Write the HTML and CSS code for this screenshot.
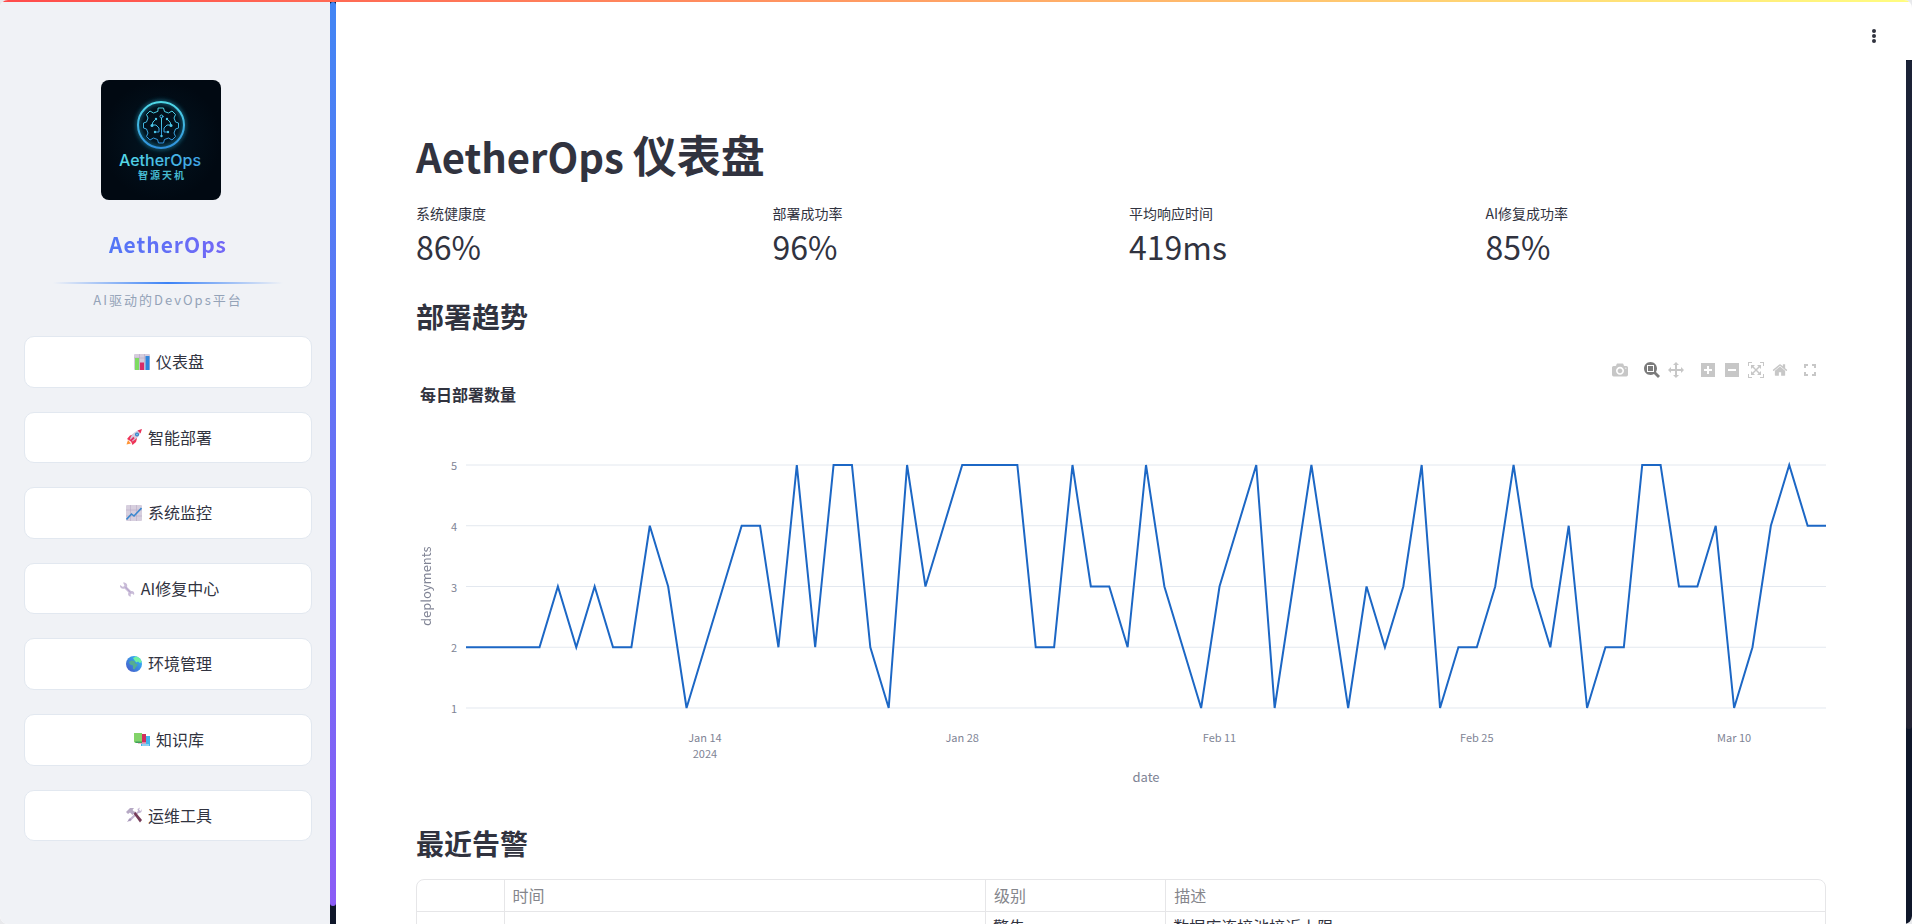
FILE: index.html
```html
<!DOCTYPE html>
<html lang="zh-CN">
<head>
<meta charset="utf-8">
<title>AetherOps 仪表盘</title>
<link rel="stylesheet" href="styles.css">
</head>
<body>
<div class="topline"></div>
<div class="app">
  <aside class="sidebar">
    <svg class="logo" viewBox="0 0 120 120" role="img" aria-label="AetherOps 智源天机">
      <defs>
        <radialGradient id="lbg"><stop offset="0" stop-color="#031522"/><stop offset="1" stop-color="#010912"/></radialGradient>
        <linearGradient id="lst" x1="0" y1="0" x2="0" y2="1"><stop offset="0" stop-color="#4fd8e6"/><stop offset="1" stop-color="#2f8fdc"/></linearGradient>
        <linearGradient id="ltx" x1="0" y1="0" x2="1" y2="0"><stop offset="0" stop-color="#55dbe4"/><stop offset="1" stop-color="#3fa3e6"/></linearGradient>
        <filter id="glow" x="-20%" y="-20%" width="140%" height="140%"><feGaussianBlur stdDeviation="2"/></filter>
      </defs>
      <rect width="120" height="120" fill="url(#lbg)"/>
      <circle cx="60" cy="45" r="23" fill="none" stroke="#1d7f9c" stroke-width="4" opacity=".7" filter="url(#glow)"/>
      <circle cx="60" cy="45" r="23" fill="none" stroke="url(#lst)" stroke-width="2"/>
      <g fill="none" stroke="url(#lst)" stroke-width="1" stroke-linejoin="round" stroke-linecap="round">
        <path d="M57.500 28h5l1 3.500 4 1.500 3.500-2 3.500 3.500-1.500 3.500 1.500 4 3 1v5l-3 1-1.500 4 1.500 3.500-3.500 3.500-3.500-2-4 1.500-1 3.500h-5l-1-3.500-4-1.500-3.500 2-3.500-3.500 1.500-3.500-1.500-4-3-1v-5l3-1 1.500-4-1.500-3.500 3.500-3.500 3.500 2 4-1.500z"/>
        <circle cx="60.500" cy="36.500" r="1.500"/>
        <path d="M60.500 38v18M55 39l-3 3-1 3h4l3 3v4h-3M66 39l3 3 1 3h-4l-3 3v4h3"/>
      </g>
      <g fill="#4cc6e8"><circle cx="60.500" cy="56" r="1.200"/><circle cx="55" cy="39" r="1.200"/><circle cx="66" cy="39" r="1.200"/><circle cx="51" cy="45.500" r="1.500"/><circle cx="70" cy="45.500" r="1.500"/><circle cx="54" cy="52" r="1.200"/><circle cx="67" cy="52" r="1.200"/></g>
      <text class="logo-name" x="59" y="86" fill="url(#ltx)">AetherOps</text>
      <text class="logo-cn" x="61" y="99" fill="#45b9cf">智源天机</text>
    </svg>
    <h2 class="brand">AetherOps</h2>
    <div class="rule"></div>
    <p class="tagline">AI驱动的DevOps平台</p>
    <nav class="nav">
      <button class="nav-btn"><svg class="emoji" viewBox="0 0 16 16"><rect width="16" height="16" rx="1" fill="#d5ccdc"/><path d="M5.500 0v16M10.500 0v16M0 4h16" stroke="#b7a9c4" stroke-width=".6"/><rect x="1" y="4" width="4" height="12" fill="#7edb62"/><rect x="6" y="8.500" width="4" height="7.500" fill="#d92c68"/><rect x="11.500" y="2" width="4" height="14" fill="#2f86dc"/></svg><span>仪表盘</span></button>
      <button class="nav-btn"><svg class="emoji" viewBox="0 0 16 16"><path d="M1 10l3-3.500 3-1 4 4-1 3.500-3.500 3-1.500-3.500z" fill="#ee3558"/><path d="M.5 15.500l1.500-4.500 3 3.500z" fill="#ff9535"/><path d="M4 10C5.500 5 9.500 1.500 15 .5c-.5 5.500-4 9.500-9 12z" fill="#d5cadd"/><path d="M11.500 1.500L16 0l-1.500 4.500z" fill="#ea3158"/><circle cx="11" cy="5.500" r="2" fill="#317ac0"/><circle cx="11" cy="5.500" r="1" fill="#71c4f2"/><path d="M4.500 12l3.500-3.500" stroke="#e53061" stroke-width="1.800"/></svg><span>智能部署</span></button>
      <button class="nav-btn"><svg class="emoji" viewBox="0 0 16 16"><rect width="16" height="16" rx="1" fill="#d7cfde"/><path d="M4.500 0v16M10.500 0v16M0 5h16M0 11h16" stroke="#b8abc6" stroke-width=".6"/><path d="M.5 14.500l5-5.500 2.500 2 7.500-8" fill="none" stroke="#3b88cf" stroke-width="1.600"/></svg><span>系统监控</span></button>
      <button class="nav-btn"><svg class="emoji" viewBox="0 0 16 16"><path d="M1 4l3 2 1.500-1.500L4 1.500c3-.5 5 2 4 4.500l4 4c2.500-.5 4 1.500 3 4l-2-1.500-1.500 1L12 15.500c-2.500 0-3.500-2-2.500-4L5.500 7.500C3 8.500.5 6.500 1 4z" fill="#c9bcd8"/><path d="M6.500 6l5 5.500" stroke="#b3a1cb" stroke-width="1"/></svg><span>AI修复中心</span></button>
      <button class="nav-btn"><svg class="emoji" viewBox="0 0 16 16"><defs><linearGradient id="sea" x1="1" y1="0" x2="0" y2="1"><stop offset="0" stop-color="#30c4ff"/><stop offset="1" stop-color="#4852c5"/></linearGradient></defs><circle cx="8" cy="8" r="8" fill="url(#sea)"/><path d="M7 2l3-1.500c3 .5 5 2.500 5.800 5.500l-2 1-1.800-1.500-1.500 1L9 5z" fill="#6ff0a0"/><path d="M3 6l2.500-1.500 3 .5 1 2.500L12 8.500 10 11l-1.500 2.500L7 13V9.500L4 8.500z" fill="#55ad92"/></svg><span>环境管理</span></button>
      <button class="nav-btn"><svg class="emoji" viewBox="0 0 16 16"><path d="M11 4h5v10H7v-3h4z" fill="#42b4ec"/><path d="M8 2h4v9.500H4V9h4z" fill="#d12f5d"/><path d="M3.500 10.500H12v1H4z" fill="#f3dceb"/><path d="M0 1h8v10H1.500L0 10z" fill="#83d369"/><path d="M1 9.500h7V11H2z" fill="#3e9e5e"/><path d="M8 12.500h7v1H8z" fill="#d9eefa"/></svg><span>知识库</span></button>
      <button class="nav-btn"><svg class="emoji" viewBox="0 0 16 16"><path d="M2 13L12 4l-.5-2L14 .5 13 3l2 1 .5-2c1 2-.5 4.500-3 4L4 14.500z" fill="#c3b5d1"/><path d="M7 6l2-1.500L16 13l-2 2.500z" fill="#753b58"/><path d="M0 5l4-4h4L6.500 3 9 5.500 6.500 8 4 5.500 2 7z" fill="#b6a9c4"/><path d="M1 15l3-4 1.500 2z" fill="#a594b7"/></svg><span>运维工具</span></button>
    </nav>
  </aside>
  <div class="track track-left"><div class="thumb thumb-left"></div></div>
  <main class="main">
    <header class="toolbar"><button class="menu" aria-label="菜单"><svg viewBox="0 0 4 16"><circle cx="2" cy="3" r="2"/><circle cx="2" cy="8" r="2"/><circle cx="2" cy="13" r="2"/></svg></button></header>
    <div class="scroller">
      <div class="content">
        <h1><span class="latin">AetherOps </span>仪表盘</h1>
        <section class="metrics">
          <div><div class="label">系统健康度</div><div class="value">86%</div></div>
          <div><div class="label">部署成功率</div><div class="value">96%</div></div>
          <div><div class="label">平均响应时间</div><div class="value">419ms</div></div>
          <div><div class="label">AI修复成功率</div><div class="value">85%</div></div>
        </section>
        <h2 class="section-title">部署趋势</h2>
        <section class="chart">
          <div class="modebar">
            <div class="group"><button aria-label="Download plot"><svg viewBox="0 0 1000 1000"><path transform="matrix(1 0 0 -1 0 850)" d="m500 450c-83 0-150-67-150-150 0-83 67-150 150-150 83 0 150 67 150 150 0 83-67 150-150 150z m400 150h-120c-16 0-34 13-39 29l-31 93c-6 15-23 28-40 28h-340c-16 0-34-13-39-28l-31-94c-6-15-23-28-40-28h-120c-55 0-100-45-100-100v-450c0-55 45-100 100-100h800c55 0 100 45 100 100v450c0 55-45 100-100 100z m-400-550c-138 0-250 112-250 250 0 138 112 250 250 250 138 0 250-112 250-250 0-138-112-250-250-250z m365 380c-19 0-35 16-35 35 0 19 16 35 35 35 19 0 35-16 35-35 0-19-16-35-35-35z"/></svg></button></div>
            <div class="group"><button class="active" aria-label="Zoom"><svg viewBox="0 0 1000 1000"><path transform="matrix(1 0 0 -1 0 850)" d="m1000-25l-250 251c40 63 63 138 63 218 0 224-182 406-407 406-224 0-406-182-406-406s183-406 407-406c80 0 155 22 218 62l250-250 125 125z m-812 250l0 438 437 0 0-438-437 0z m62 375l313 0 0-312-313 0 0 312z"/></svg></button><button aria-label="Pan"><svg viewBox="0 0 1000 1000"><path transform="matrix(1 0 0 -1 0 850)" d="m1000 350l-187 188 0-125-250 0 0 250 125 0-188 187-187-187 125 0 0-250-250 0 0 125-188-188 186-187 0 125 252 0 0-250-125 0 187-188 188 188-125 0 0 250 250 0 0-126 187 188z"/></svg></button></div>
            <div class="group"><button aria-label="Zoom in"><svg viewBox="-62 0 1000 1000"><path transform="matrix(1 0 0 -1 0 850)" d="m1 787l0-875 875 0 0 875-875 0z m687-500l-187 0 0-187-125 0 0 187-188 0 0 125 188 0 0 187 125 0 0-187 187 0 0-125z"/></svg></button><button aria-label="Zoom out"><svg viewBox="-62 0 1000 1000"><path transform="matrix(1 0 0 -1 0 850)" d="m0 788l0-876 875 0 0 876-875 0z m688-500l-500 0 0 125 500 0 0-125z"/></svg></button><button aria-label="Autoscale"><svg viewBox="0 0 1000 1000"><path transform="matrix(1 0 0 -1 0 850)" d="m250 850l-187 0-63 0 0-62 0-188 63 0 0 188 187 0 0 62z m688 0l-188 0 0-62 188 0 0-188 62 0 0 188 0 62-62 0z m-875-938l0 188-63 0 0-188 0-62 63 0 187 0 0 62-187 0z m875 188l0-188-188 0 0-62 188 0 62 0 0 62 0 188-62 0z m-125 188l-1 0-93-94-156 156 156 156 92-93 2 0 0 250-250 0 0-2 93-92-156-156-156 156 94 92 0 2-250 0 0-250 0 0 93 93 157-156-157-156-93 94 0 0 0-250 250 0 0 0-94 93 156 157 156-157-93-93 0 0 250 0 0 250z"/></svg></button><button aria-label="Reset axes"><svg viewBox="-36 0 1000 1000"><path transform="matrix(1 0 0 -1 0 850)" d="m786 296v-267q0-15-11-26t-25-10h-214v214h-143v-214h-214q-15 0-25 10t-11 26v267q0 1 0 2t0 2l321 264 321-264q1-1 1-4z m124 39l-34-41q-5-5-12-6h-2q-7 0-12 3l-386 322-386-322q-7-4-13-4-7 2-12 7l-35 41q-4 5-3 13t6 12l401 334q18 15 42 15t43-15l136-114v109q0 8 5 13t13 5h107q8 0 13-5t5-13v-227l122-102q5-5 6-12t-4-13z"/></svg></button></div>
            <div class="group"><button aria-label="Fullscreen"><svg viewBox="0 0 16 16"><path fill-rule="evenodd" d="M2 2h4v2H4v2H2zM10 2h4v4h-2V4h-2zM2 10h2v2h2v2H2zM12 10h2v4h-4v-2h2z"/></svg></button></div>
          </div>
          <h3 class="chart-title">每日部署数量</h3>
          <div class="plot">
            <div class="y-title">deployments</div>
            <div class="y-ticks"><span>5</span><span>4</span><span>3</span><span>2</span><span>1</span></div>
            <svg class="canvas" viewBox="0 0 74 4" preserveAspectRatio="none" aria-hidden="true">
              <path class="grid" d="M0 0H74M0 1H74M0 2H74M0 3H74M0 4H74"/>
              <polyline class="series" points="0,3 4,3 5,2 6,3 7,2 8,3 9,3 10,1 11,2 12,4 13,3 14,2 15,1 16,1 17,3 18,0 19,3 20,0 21,0 22,3 23,4 24,0 25,2 26,1 27,0 30,0 31,3 32,3 33,0 34,2 35,2 36,3 37,0 38,2 39,3 40,4 41,2 42,1 43,0 44,4 45,2 46,0 47,2 48,4 49,2 50,3 51,2 52,0 53,4 54,3 55,3 56,2 57,0 58,2 59,3 60,1 61,4 62,3 63,3 64,0 65,0 66,2 67,2 68,1 69,4 70,3 71,1 72,0 73,1 74,1"/>
            </svg>
            <div class="x-ticks"><span class="t1">Jan 14<br>2024</span><span class="t2">Jan 28</span><span class="t3">Feb 11</span><span class="t4">Feb 25</span><span class="t5">Mar 10</span></div>
            <div class="x-title">date</div>
          </div>
        </section>
        <h2 class="section-title">最近告警</h2>
        <div class="table-wrap">
          <table>
            <colgroup><col class="c-index"><col class="c-time"><col class="c-level"><col></colgroup>
            <thead><tr><th></th><th>时间</th><th>级别</th><th>描述</th></tr></thead>
            <tbody><tr><td></td><td></td><td>警告</td><td>数据库连接池接近上限</td></tr></tbody>
          </table>
        </div>
      </div>
    </div>
  </main>
  <div class="track track-right"><div class="thumb thumb-right"></div></div>
</div>
</body>
</html>
```

FILE: styles.css
```css
* { box-sizing: border-box; }
html { background: #e8e9ec; }
body {
  margin: 0;
  height: 100vh;
  overflow: hidden;
  display: flex;
  flex-direction: column;
  border-radius: 8px;
  background: #fff;
  color: #31333f;
  font: 16px/1.6 "Noto Sans CJK SC", sans-serif;
}
button { font: inherit; color: inherit; }
h1, h2, h3, p { margin: 0; }

.topline { height: 2px; flex: none; background: linear-gradient(90deg, #ff4b4b, #fffd80); }
.app { flex: 1; min-height: 0; display: flex; }

.sidebar {
  width: 330px;
  flex: none;
  background: #f0f2f6;
  padding: 78px 18px 0 24px;
  overflow: hidden;
  display: flex;
  flex-direction: column;
  align-items: center;
}
.logo { width: 120px; height: 120px; flex: none; border-radius: 8px; margin-right: 14px; }
.logo-name { font: 500 16px Inter, sans-serif; text-anchor: middle; }
.logo-cn { font: 700 10px "Noto Sans CJK SC", sans-serif; letter-spacing: 2px; text-anchor: middle; }
.brand {
  margin-top: 24px;
  font-size: 21px;
  line-height: 40px;
  font-weight: 700;
  letter-spacing: 1px;
  background: linear-gradient(90deg, #3b82f6, #8b5cf6);
  -webkit-background-clip: text;
  background-clip: text;
  color: transparent;
  align-self: stretch;
  text-align: center;
}
.rule { width: 80%; height: 2px; margin-top: 18px; background: linear-gradient(90deg, transparent, #3b82f6, transparent); flex: none; }
.tagline { margin-top: 6px; font-size: 13px; line-height: 20px; letter-spacing: 2px; color: #94a3b8; }
.nav { align-self: stretch; margin-top: 26px; display: flex; flex-direction: column; gap: 24px; }
.nav-btn {
  display: flex;
  align-items: center;
  justify-content: center;
  gap: 6px;
  padding: 12px 12px 12px 14px;
  border: 1px solid #e2e8f0;
  border-radius: 10px;
  background: #fff;
  line-height: 1.6;
}
.emoji { width: 16px; height: 16px; }

.track { width: 6px; flex: none; background: #0f172a; }
.thumb { border-radius: 3px; }
.thumb-left { height: 98%; background: linear-gradient(180deg, #4285f4, #8b5cf6); }
.track-right { margin-top: 58px; border-radius: 0 0 8px 0; }
.thumb-right { height: 77.4%; background: linear-gradient(180deg, #1b2237, #242434); }

.main { flex: 1; min-width: 0; display: flex; flex-direction: column; }
.toolbar { height: 58px; flex: none; display: flex; justify-content: flex-end; align-items: center; padding: 10px 28px 0; }
.menu { border: 0; background: none; padding: 4px 2px; display: flex; }
.menu svg { width: 4px; height: 16px; fill: #31333f; }
.scroller { flex: 1; min-height: 0; overflow: hidden; }
.content { padding: 68px 80px 0; }
h1 { font-size: 44px; line-height: 53px; font-weight: 700; }
.latin { font-size: 40px; line-height: 1; }
.metrics { margin-top: 22px; display: grid; grid-template-columns: repeat(4, 1fr); gap: 16px; }
.label { font-size: 14px; line-height: 20px; }
.value { font-size: 32px; line-height: 46px; }
.section-title { font-size: 28px; line-height: 34px; font-weight: 700; }
.metrics + .section-title { margin-top: 30px; }

.modebar { display: flex; justify-content: flex-end; margin-top: 25px; padding-right: 4px; height: 24px; align-items: center; }
.group { display: flex; padding-left: 8px; }
.group:last-child { padding-left: 6px; }
.modebar button { width: 24px; height: 24px; padding: 4px; border: 0; background: none; display: flex; }
.modebar svg { width: 16px; height: 16px; fill: #c7c7c7; }
.modebar .active svg { fill: #7b7b7b; }
.chart-title { font-size: 16px; line-height: 24px; font-weight: 700; padding-left: 4px; }
.plot {
  margin-top: 51px;
  display: grid;
  grid-template-columns: 20px 30px minmax(0, 1fr);
  grid-template-rows: 259px auto auto;
}
.y-title { writing-mode: vertical-rl; rotate: 180deg; text-align: center; font-size: 13px; line-height: 20px; color: #808495; }
.y-ticks { display: flex; flex-direction: column; justify-content: space-between; align-items: flex-end; padding-right: 9px; font-size: 11px; line-height: 16px; color: #808495; }
.canvas { width: 100%; height: 243px; align-self: center; overflow: visible; }
.grid, .series { fill: none; vector-effect: non-scaling-stroke; }
.grid { stroke: #e3e8ef; stroke-width: 1px; shape-rendering: crispEdges; }
.series { stroke: #1c67c5; stroke-width: 2px; }
.x-ticks { grid-column: 3; display: grid; grid-template-columns: repeat(74, minmax(0, 1fr)); margin-top: 13px; font-size: 11px; line-height: 16px; color: #808495; text-align: center; }
.t1 { grid-column: 9 / span 10; }
.t2 { grid-column: 23 / span 10; }
.t3 { grid-column: 37 / span 10; }
.t4 { grid-column: 51 / span 10; }
.t5 { grid-column: 65 / span 10; }
.x-title { grid-column: 3; text-align: center; font-size: 13px; line-height: 20px; color: #808495; margin-top: 6px; }
.chart + .section-title { margin-top: 39px; }

.table-wrap { margin-top: 19px; border: 1px solid #e6e6e8; border-radius: 8px; }
table { width: 100%; table-layout: fixed; border-collapse: collapse; font-size: 16px; line-height: 31px; text-align: left; }
.c-index { width: 87px; }
.c-time { width: 34.2%; }
.c-level { width: 12.8%; }
th { font-weight: 400; color: #85868c; padding: 0 8px; border-bottom: 1px solid #e6e6e8; }
td { padding: 0 7px; line-height: 28px; }
th + th, td + td { border-left: 1px solid #e6e6e8; }
```
